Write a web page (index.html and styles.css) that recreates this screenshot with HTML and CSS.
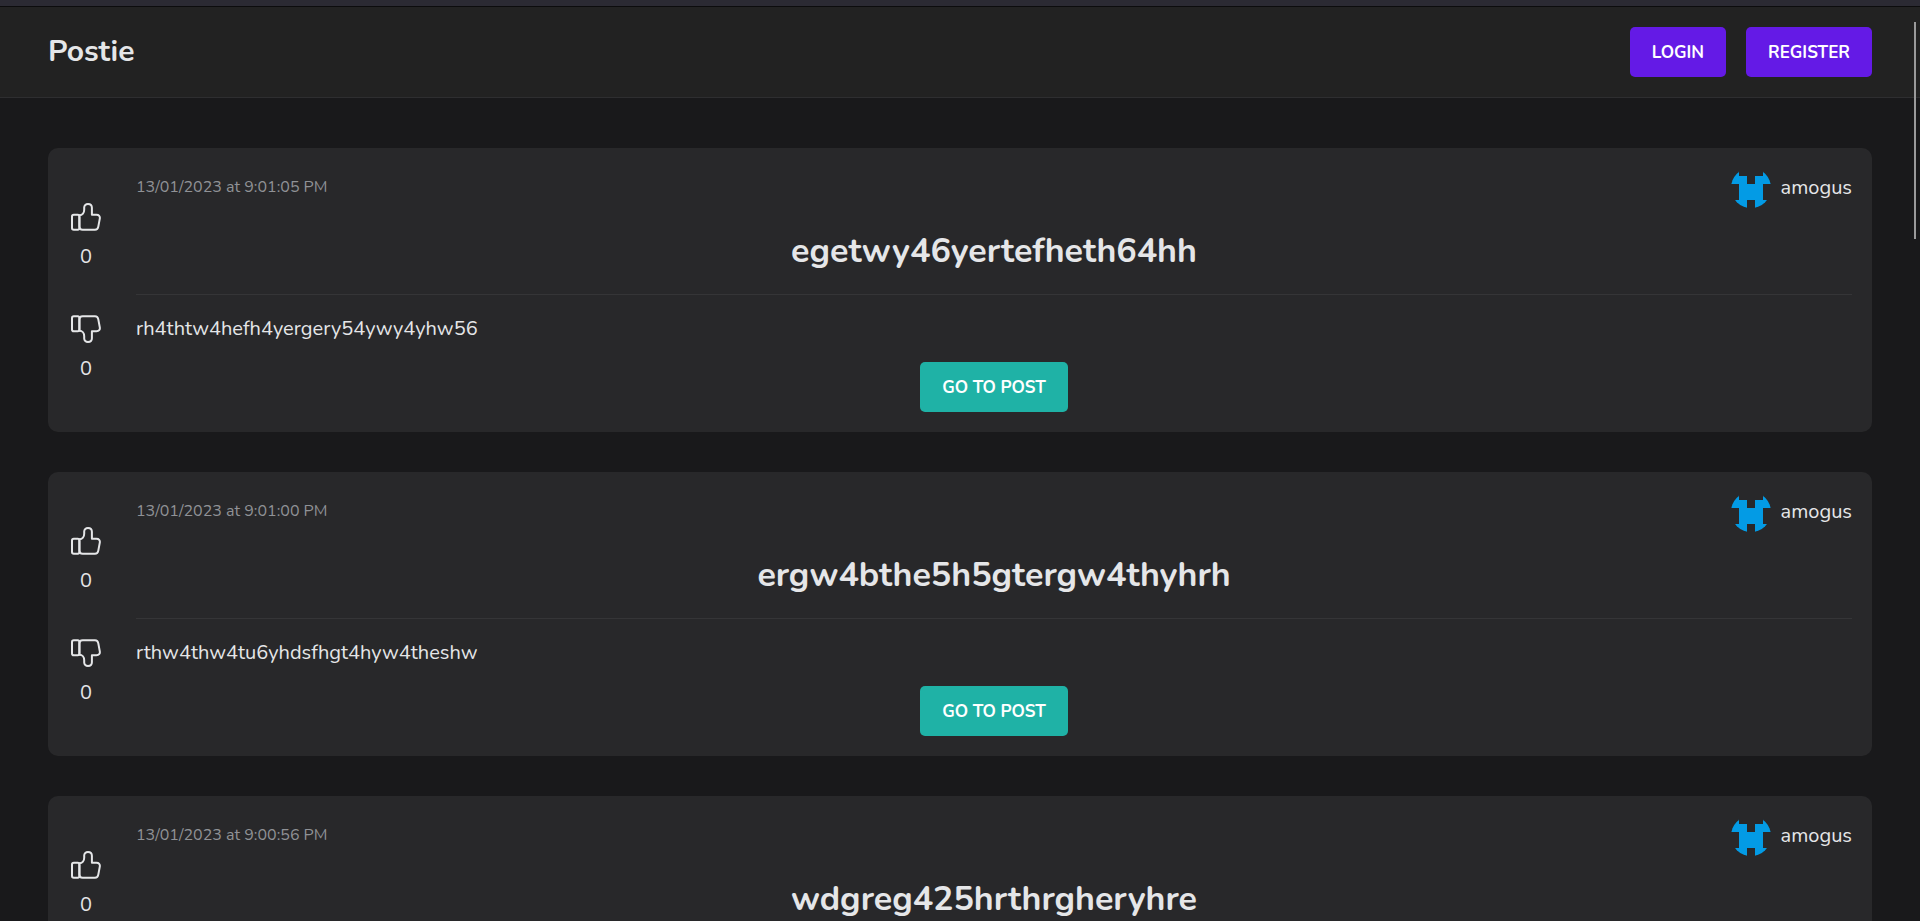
FILE: index.html
```
<!DOCTYPE html>
<html lang="en">
<head>
    <meta charset="UTF-8">
    <meta name="viewport" content="width=device-width, initial-scale=1.0">
    <title>Postie</title>
    <link rel="stylesheet" href="styles.css">
</head>
<body>

    <!-- Shared icons -->
    <svg class="sprite" aria-hidden="true">
        <symbol id="thumb" viewBox="0 0 30 28">
            <path d="M2.8 11.8h4q1.6 0 1.6 1.6v11.600q0 1.800-1.600 1.800h-4q-1.800 0-1.800-1.800v-11.400q0-1.800 1.800-1.800z"/>
            <path d="M8.400 12.200c3 0 4.800-2.400 4.800-5.400v-2.200c0-2.200 1.600-3.600 3.800-3.600s3.900 1.500 3.900 3.700v7.100h4.600c2.400 0 3.700 1.500 3.300 3.800l-1.500 8c-.4 2.200-1.500 3.200-3.300 3.200h-12.400c-2 0-3.200-1.300-3.200-3.200z"/>
        </symbol>
        <symbol id="avatar" viewBox="0 0 40 40">
            <path d="M0 0h8v8h8v8h8v-8h8v-8h8v16h-8v16h8v8h-16v-8h-8v8h-16v-8h8v-16h-8z"/>
        </symbol>
    </svg>

    <div class="top-strip"></div>

    <header class="navbar">
        <a class="brand" href="#">Postie</a>
        <nav class="nav-buttons">
            <button type="button" class="btn btn-primary">Login</button>
            <button type="button" class="btn btn-primary">Register</button>
        </nav>
    </header>

    <main class="posts">
        <article class="post">
            <div class="votes">
                <button type="button" class="vote" aria-label="Like"><svg><use href="#thumb"/></svg><span>0</span></button>
                <button type="button" class="vote down" aria-label="Dislike"><svg><use href="#thumb"/></svg><span>0</span></button>
            </div>
            <div class="content">
                <div class="meta">
                    <time>13/01/2023 at 9:01:05 PM</time>
                    <a class="author" href="#"><svg><use href="#avatar"/></svg>amogus</a>
                </div>
                <h2>egetwy46yertefheth64hh</h2>
                <p>rh4thtw4hefh4yergery54ywy4yhw56</p>
                <button type="button" class="btn btn-accent">Go to post</button>
            </div>
        </article>

        <article class="post">
            <div class="votes">
                <button type="button" class="vote" aria-label="Like"><svg><use href="#thumb"/></svg><span>0</span></button>
                <button type="button" class="vote down" aria-label="Dislike"><svg><use href="#thumb"/></svg><span>0</span></button>
            </div>
            <div class="content">
                <div class="meta">
                    <time>13/01/2023 at 9:01:00 PM</time>
                    <a class="author" href="#"><svg><use href="#avatar"/></svg>amogus</a>
                </div>
                <h2>ergw4bthe5h5gtergw4thyhrh</h2>
                <p>rthw4thw4tu6yhdsfhgt4hyw4theshw</p>
                <button type="button" class="btn btn-accent">Go to post</button>
            </div>
        </article>

        <article class="post">
            <div class="votes">
                <button type="button" class="vote" aria-label="Like"><svg><use href="#thumb"/></svg><span>0</span></button>
                <button type="button" class="vote down" aria-label="Dislike"><svg><use href="#thumb"/></svg><span>0</span></button>
            </div>
            <div class="content">
                <div class="meta">
                    <time>13/01/2023 at 9:00:56 PM</time>
                    <a class="author" href="#"><svg><use href="#avatar"/></svg>amogus</a>
                </div>
                <h2>wdgreg425hrthrgheryhre</h2>
                <p></p>
                <button type="button" class="btn btn-accent">Go to post</button>
            </div>
        </article>
    </main>

    <div class="scroll-thumb"></div>

</body>
</html>
```
FILE: styles.css
```
* {
    box-sizing: border-box;
}

html {
    scrollbar-width: none;
}

body {
    margin: 0;
    background-color: #19191b;
    color: #e5e6e8;
    font-family: Nunito, "Noto Sans", sans-serif;
    font-size: 20px;
    line-height: 28px;
}

a {
    color: inherit;
    text-decoration: none;
}

button {
    font-family: inherit;
    cursor: pointer;
}

.sprite {
    display: none;
}

.top-strip {
    height: 7px;
    background-color: #2b2a33;
    border-bottom: 1px solid #0c0c0d;
}

.navbar {
    display: flex;
    justify-content: space-between;
    align-items: center;
    padding: 20px 48px;
    background-color: #222222;
    border-bottom: 1px solid #2e2e30;
}

.brand {
    font-size: 30px;
    font-weight: 700;
}

.nav-buttons {
    display: flex;
    gap: 20px;
}

.btn {
    height: 50px;
    padding: 0 22px;
    border: none;
    border-radius: 5px;
    color: #ffffff;
    font-size: 17px;
    font-weight: 700;
    text-transform: uppercase;
}

.btn-primary {
    background-color: #641ae6;
}

.btn-accent {
    background-color: #1fb2a6;
}

.posts {
    display: flex;
    flex-direction: column;
    gap: 40px;
    padding: 50px 48px;
}

.post {
    display: flex;
    gap: 32px;
    padding: 20px;
    border-radius: 10px;
    background-color: #28282a;
}

.votes {
    display: flex;
    flex-direction: column;
    justify-content: center;
    gap: 44px;
    width: 36px;
    padding-top: 6px;
}

.vote {
    display: flex;
    flex-direction: column;
    align-items: center;
    gap: 12px;
    padding: 0;
    border: none;
    background: none;
    color: inherit;
    font-size: 20px;
    line-height: 28px;
}

.vote svg {
    width: 30px;
    height: 28px;
    fill: none;
    stroke: currentColor;
    stroke-width: 2;
    stroke-linejoin: round;
}

.vote.down svg {
    transform: scaleY(-1);
}

.content {
    display: flex;
    flex-direction: column;
    flex: 1;
    align-items: center;
}

.meta {
    display: flex;
    justify-content: space-between;
    width: 100%;
}

time {
    padding-top: 5px;
    color: #909296;
    font-size: 16px;
}

.author {
    display: flex;
    align-items: center;
    gap: 10px;
}

.author svg {
    width: 40px;
    height: 40px;
    border-radius: 50%;
    fill: #039be5;
}

h2 {
    width: 100%;
    margin: 0 0 20px;
    padding: 20px 0;
    border-bottom: 1px solid #353537;
    font-size: 34px;
    line-height: 46px;
    text-align: center;
}

p {
    width: 100%;
    min-height: 27px;
    margin: 0 0 20px;
    line-height: 27px;
}

/* Thin scroll indicator over the page */
.scroll-thumb {
    position: fixed;
    top: 22px;
    right: 4px;
    width: 2px;
    height: 217px;
    background-color: #9a9a9b;
}
```
